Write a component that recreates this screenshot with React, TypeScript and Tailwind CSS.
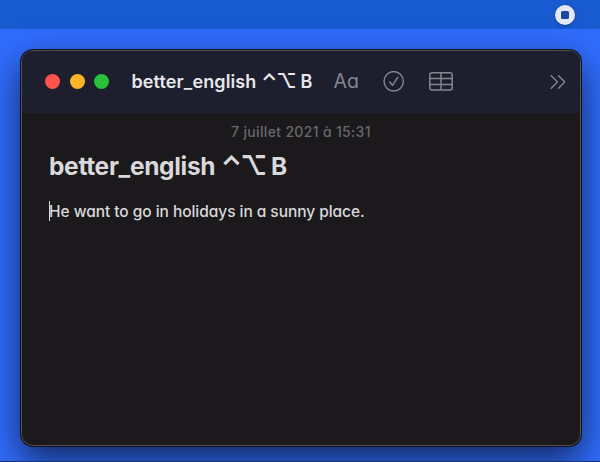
import React from "react";

function RecordingDot() {
  return (
    <div className="flex size-5 items-center justify-center rounded-full bg-[#e3e8f4] shadow-[0_1px_3px_rgba(0,0,0,0.35)]">
      <div className="size-2 rounded-[1.5px] bg-[#174a9c]" />
    </div>
  );
}

function CheckCircle() {
  return (
    <svg width="22" height="22" viewBox="0 0 22 22" fill="none" stroke="currentColor" strokeWidth="1.4" strokeLinecap="round" strokeLinejoin="round">
      <circle cx="10.7" cy="10.3" r="9.7" />
      <path d="M6.7 11 L9.5 14.3 L14.7 6.3" />
    </svg>
  );
}

function TableIcon() {
  return (
    <svg width="24" height="20" viewBox="0 0 24 20" fill="none" stroke="currentColor" strokeWidth="1.5">
      <rect x="0.8" y="0.8" width="22.4" height="17.2" rx="2.2" />
      <path d="M1 6.5H23M1 12.4H23M12 0.8V18" />
    </svg>
  );
}

function MoreChevrons() {
  return (
    <svg width="16" height="16" viewBox="0 0 16 16" fill="none" stroke="currentColor" strokeWidth="1.4" strokeLinecap="round" strokeLinejoin="round">
      <path d="M1.2 1.7 L7.5 8 L1.2 14.3M8.5 1.7 L14.8 8 L8.5 14.3" />
    </svg>
  );
}

export default function App() {
  return (
    <div className="flex h-[462px] w-[600px] flex-col overflow-hidden border-b border-[#18336f] bg-[#306cfd] font-['Inter','DejaVu_Sans',sans-serif] [font-feature-settings:'cv11']">
      <div className="flex h-[29px] shrink-0 justify-end bg-[#185bd0] pt-[5px] pr-[25px]">
        <RecordingDot />
      </div>
      <div className="mt-[21px] ml-[21px] flex h-[396px] w-[560px] shrink-0 flex-col overflow-hidden rounded-[12px] border border-[#515156] bg-[#1b191b] shadow-[0_0_0_1px_#10131d,0_14px_36px_rgba(0,0,0,0.65)]">
        <header className="flex h-[62px] shrink-0 items-center bg-[#1d1f2e] pr-[14px] pl-[23px] text-[#85868f]">
          <div className="mb-px flex w-[64px] shrink-0 justify-between">
            <i className="size-[15px] rounded-full bg-[#ff544d]" />
            <i className="size-[15px] rounded-full bg-[#feb429]" />
            <i className="size-[15px] rounded-full bg-[#28c138]" />
          </div>
          <h2 className="ml-[22.5px] w-[202px] shrink-0 text-[18px] leading-6 font-semibold tracking-[0.12px] whitespace-nowrap text-[#e7e7ea]">
            better_english <span className="text-[20px] leading-none tracking-[-0.9px]">⌃⌥</span> B
          </h2>
          <span className="mb-[2px] w-[49px] shrink-0 text-[19.5px] leading-6">Aa</span>
          <CheckCircle />
          <span className="w-[24.5px] shrink-0" />
          <TableIcon />
          <span className="flex-1" />
          <MoreChevrons />
        </header>
        <main className="flex flex-col pl-[27px] text-[#d9d8da]">
          <time className="mt-[10px] mr-[27px] h-[18px] text-center text-[14px] leading-[18px] font-medium tracking-[0.33px] text-[#69686b]">7 juillet 2021 à 15:31</time>
          <h1 className="mt-[8px] h-[34px] text-[24.5px] leading-[34px] font-bold tracking-[-0.32px] whitespace-nowrap">
            better_english <span className="text-[26.5px] leading-none tracking-[-1.8px]">⌃⌥</span> B
          </h1>
          <div className="mt-[18px] flex h-5 items-center">
            <span className="h-5 w-px shrink-0 bg-[#d9d8da]" />
            <p className="-ml-px pt-px text-[15.5px] leading-5 font-[450] tracking-[-0.05px] whitespace-nowrap">He want to go in holidays in a sunny place.</p>
          </div>
        </main>
      </div>
    </div>
  );
}
